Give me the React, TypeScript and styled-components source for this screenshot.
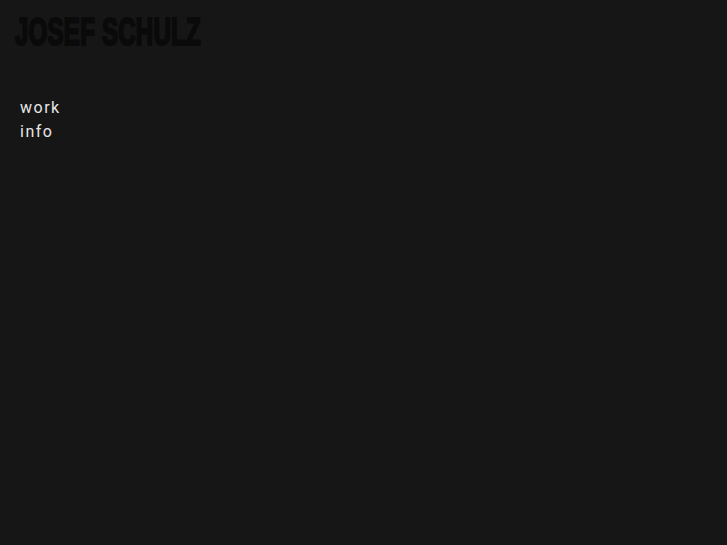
import React from "react";
import styled, { createGlobalStyle } from "styled-components";

const Global = createGlobalStyle`
  html, body { margin: 0; padding: 0; background: #161616; }
  body { min-height: 100vh; }
`;

const Page = styled.div`
  min-height: 545px;
  background: #161616;
  padding: 13px 0 0 15px;
  box-sizing: border-box;
`;

const Logo = styled.h1`
  display: inline-block;
  margin: 0;
  font-family: "Liberation Sans", Arial, sans-serif;
  font-weight: 700;
  font-size: 38px;
  line-height: 38px;
  color: #0a0a0a;
  -webkit-text-stroke: 2.2px #0a0a0a;
  letter-spacing: 0.3px;
  transform: scaleX(0.635);
  transform-origin: left top;
  white-space: nowrap;
`;

const Nav = styled.nav`
  display: flex;
  flex-direction: column;
  margin: 45px 0 0 5px;
`;

const NavLink = styled.a`
  font-family: Roboto, "Liberation Sans", sans-serif;
  font-size: 16px;
  line-height: 24px;
  letter-spacing: 1.5px;
  color: #e6e6e6;
  text-decoration: none;
`;

export default function App() {
  return (
    <>
      <Global />
      <Page>
        <Logo>JOSEF SCHULZ</Logo>
        <Nav>
          <NavLink href="#">work</NavLink>
          <NavLink href="#">info</NavLink>
        </Nav>
      </Page>
    </>
  );
}
